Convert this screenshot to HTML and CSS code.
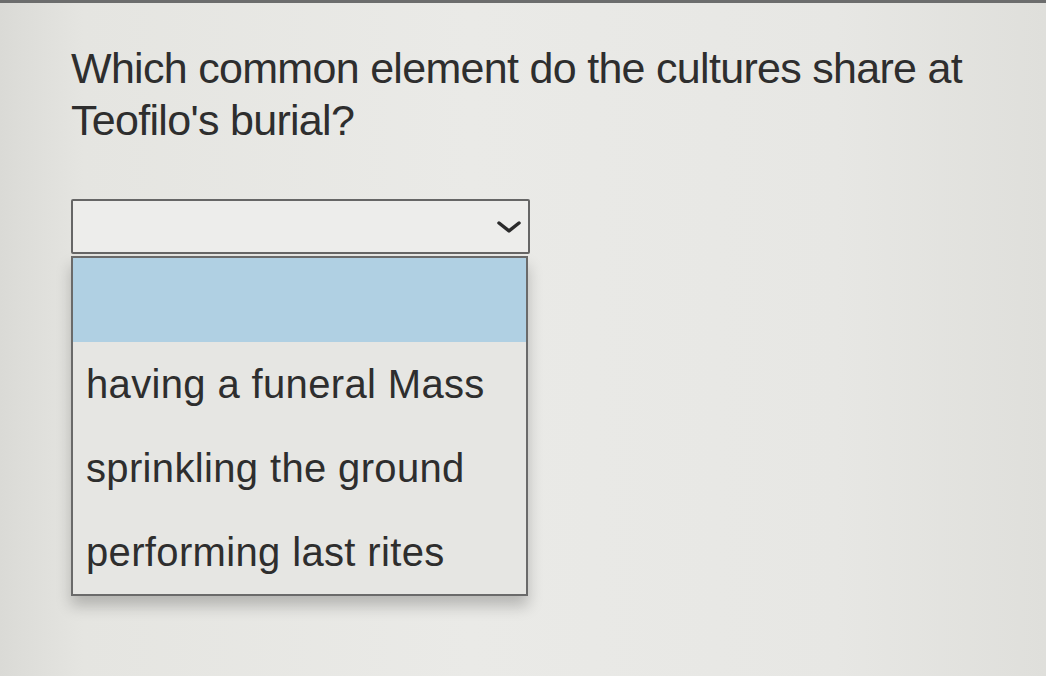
FILE: index.html
```html
<!DOCTYPE html>
<html>
<head>
  <title>Question</title>
  <link rel="stylesheet" href="styles.css">
</head>
<body>
  <div class="page">
    <p class="question">Which common element do the cultures share at Teofilo's burial?</p>

    <div class="dropdown">
      <div class="select">
        <svg class="chevron" width="26" height="16" viewBox="0 0 26 16">
          <path d="M3 4 L13 12 L23 4" fill="none" stroke="#2b2b2b" stroke-width="3.5" stroke-linecap="round" stroke-linejoin="round"/>
        </svg>
      </div>
      <ul class="options">
        <li class="option active"></li>
        <li class="option">having a funeral Mass</li>
        <li class="option">sprinkling the ground</li>
        <li class="option">performing last rites</li>
      </ul>
    </div>
  </div>
</body>
</html>
```

FILE: styles.css
```css
html, body {
  margin: 0;
  height: 100%;
}
body {
  font-family: "Liberation Sans", Arial, sans-serif;
  color: #2e2e2e;
  background: linear-gradient(90deg, #dadad6 0%, #e5e5e1 8%, #eaeae7 45%, #e7e7e4 80%, #dfdfdb 100%);
  border-top: 3px solid #6c6d6d;
  box-sizing: border-box;
  overflow: hidden;
}
.page {
  padding: 39px 0 0 71px;
}
.question {
  margin: 0;
  width: 920px;
  font-size: 43px;
  line-height: 52px;
  letter-spacing: -0.7px;
}
.dropdown {
  margin-top: 53px;
  width: 459px;
}
.select {
  height: 51px;
  border: 2px solid #666;
  border-radius: 2px;
  background: #ededeb;
  display: flex;
  align-items: center;
  justify-content: flex-end;
  padding-right: 6px;
}
.options {
  list-style: none;
  margin: 2px 0 0 0;
  padding: 0;
  width: 453px;
  border: 2px solid #6a6a6a;
  background: #e6e6e3;
  box-shadow: 0 10px 14px rgba(0, 0, 0, 0.22);
}
.option {
  height: 84px;
  line-height: 84px;
  padding-left: 13px;
  font-size: 40px;
  letter-spacing: 0.35px;
  white-space: nowrap;
}
.option.active {
  background: #b0d0e3;
}
```
